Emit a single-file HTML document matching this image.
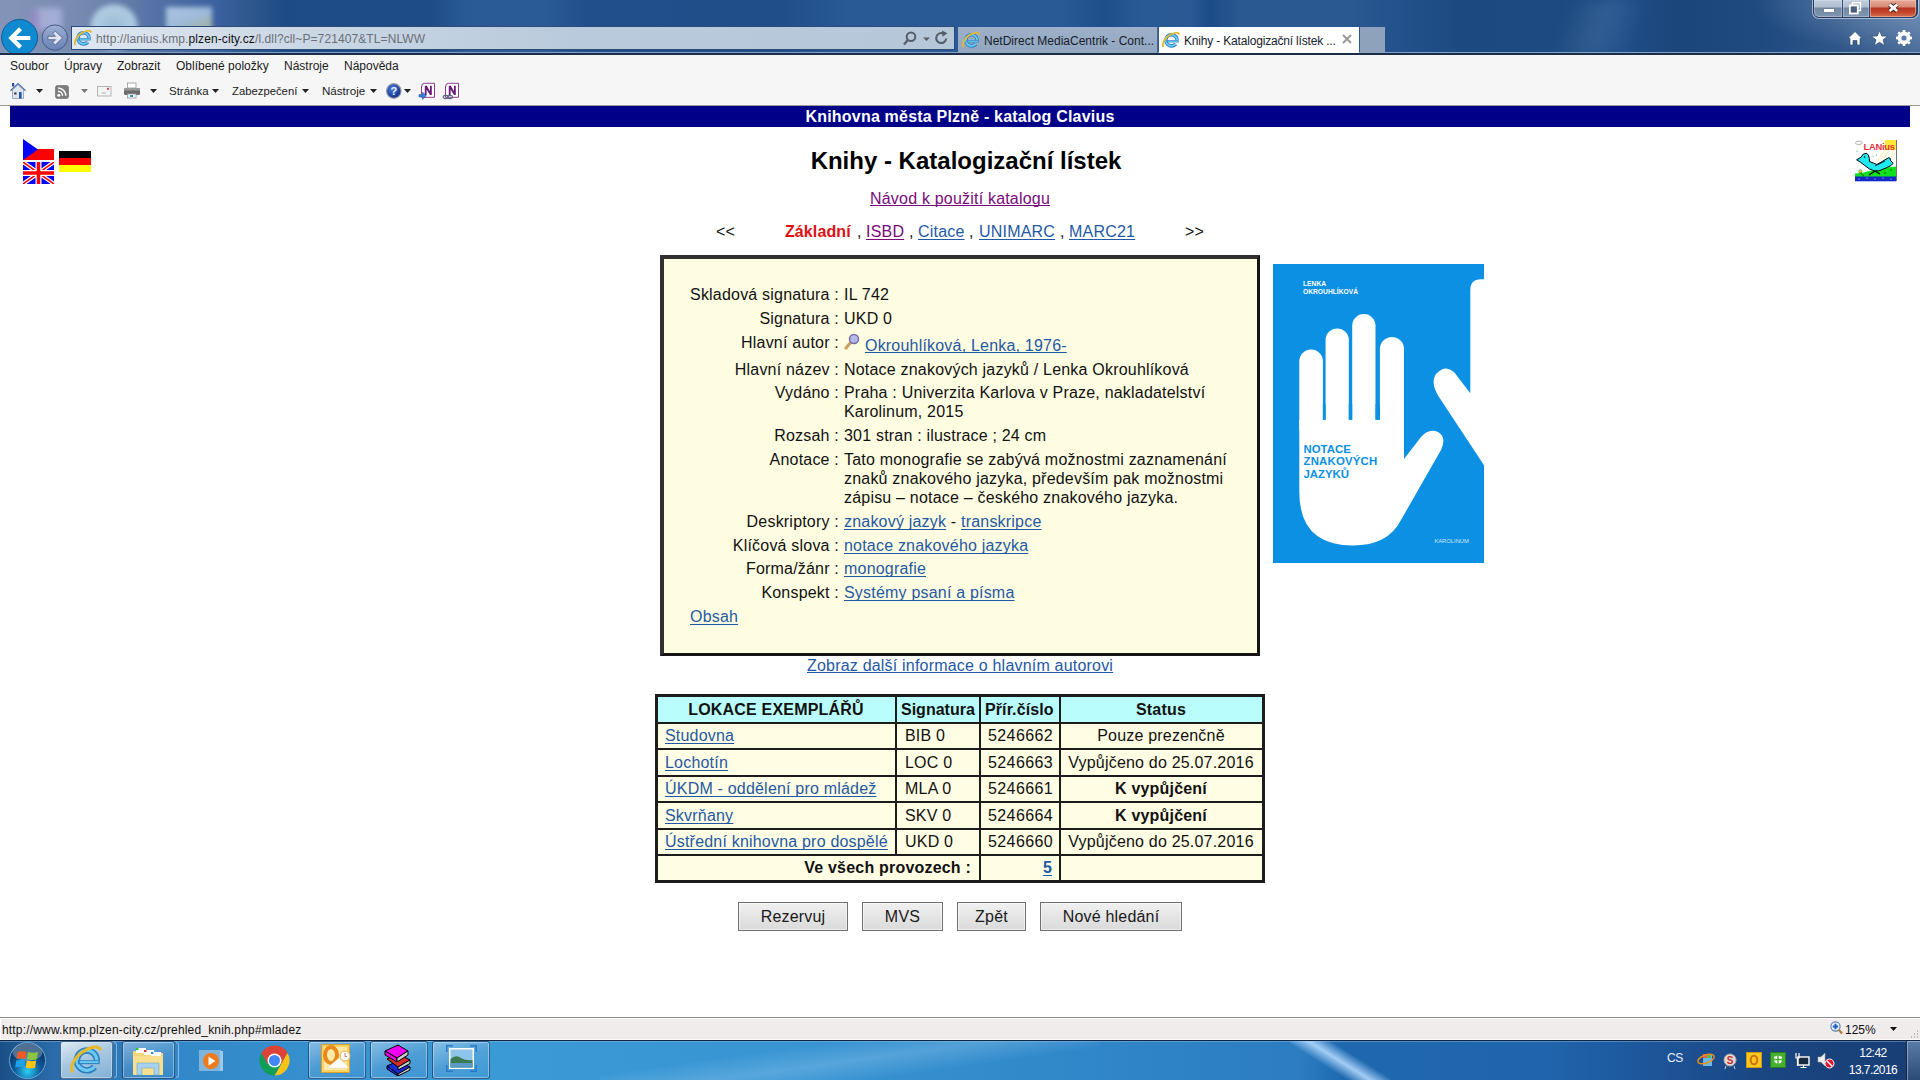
<!DOCTYPE html>
<html><head><meta charset="utf-8">
<style>
*{box-sizing:border-box}
html,body{margin:0;padding:0;width:1920px;height:1080px;overflow:hidden;background:#fff;font-family:"Liberation Sans",sans-serif}
.a{position:absolute;white-space:nowrap}
.t16{font-size:16px;line-height:19px;letter-spacing:0.2px;color:#111}
.b{font-weight:bold}
.lk{color:#1f59a4;text-decoration:underline;text-underline-offset:1.5px;text-decoration-skip-ink:none}
.vl{color:#7a0a7a;text-decoration:underline;text-underline-offset:1.5px;text-decoration-skip-ink:none}
.ui{font-size:12px;line-height:15px;color:#1b1b1b}
#top{left:0;top:0;width:1920px;height:55px;overflow:hidden;background:linear-gradient(90deg,#7a8cb0 0px,#7083aa 60px,#5a76a6 140px,#3d62a0 215px,#30598f 245px,#1d4b85 285px,#1d4c87 430px,#2a5a95 465px,#2c5c98 540px,#214f8b 585px,#1f4e89 780px,#2a5a96 850px,#2a5a96 1060px,#1f4f8a 1105px,#2a5a95 1140px,#2a5994 1190px,#1c4c88 1210px,#2a5890 1240px,#2a5890 1350px,#22518b 1400px,#1c4a80 1460px,#1d4a80 1580px,#1f4d86 1620px,#1b467c 1680px,#1e4a80 1760px,#2f5688 1840px,#4a6c9a 1920px)}
#menubar{left:0;top:55px;width:1920px;height:50px;background:#f6f6f7}
#status{left:0;top:1017px;width:1920px;height:23px;background:#efeceb;border-top:1px solid #8a8a8a;box-shadow:inset 1px 1px 0 #fff,inset 0 -1px 0 #fafafa}
#task{left:0;top:1040px;width:1920px;height:40px;overflow:hidden;background:linear-gradient(90deg,#1a4f86 0,#2a6aa8 50px,#3288c8 180px,#3a9ad6 480px,#3894d2 800px,#2f86c8 1100px,#2c7cc2 1300px,#1f68b0 1345px,#1f64ac 1550px,#1d5498 1660px,#1a4682 1760px,#183e74 1920px);border-top:1px solid #0d2540}
.tbb{border:1px solid rgba(10,40,80,.6);border-radius:3px;box-shadow:inset 0 0 0 1px rgba(220,240,255,.45);background:linear-gradient(160deg,rgba(200,225,245,.55) 0%,rgba(120,175,220,.35) 50%,rgba(80,150,210,.2) 100%)}
.lab{text-align:right;width:200px;left:639px}
.val{left:844px}
.btn{background:linear-gradient(#f0f0f0,#e5e5e5 50%,#dadada);box-shadow:inset 0 0 0 1px rgba(255,255,255,.55);border:1px solid #707070;font-size:16px;line-height:27px;text-align:center;color:#1a1a1a;letter-spacing:0.2px}
</style></head><body>
<div id="top" class="a">
<div class="a" style="left:0;top:0;width:150px;height:55px;background:linear-gradient(90deg,rgba(140,155,190,.55),rgba(140,155,190,.35) 80px,rgba(140,155,190,0))"></div>
<div class="a" style="left:36px;top:8px;width:26px;height:22px;background:#aeb6de;filter:blur(3px);opacity:.8"></div>
<div class="a" style="left:30px;top:10px;width:10px;height:22px;background:#9a88c8;filter:blur(3px);opacity:.6"></div>
<div class="a" style="left:90px;top:4px;width:48px;height:46px;border-radius:50%;background:radial-gradient(circle,#9ec2da 0,#b8d4e6 55%,#a8c4dc 70%,rgba(160,190,220,0) 100%);filter:blur(2.5px);opacity:.9"></div>
<div class="a" style="left:166px;top:7px;width:46px;height:24px;background:linear-gradient(160deg,#b8cfe8 0,#a8c4e2 50%,#b0b890 100%);filter:blur(2.5px);opacity:.9"></div>
<div class="a" style="left:1540px;top:0;width:120px;height:55px;background:linear-gradient(110deg,rgba(255,255,255,0) 20%,rgba(120,160,210,.22) 50%,rgba(255,255,255,0) 80%);filter:blur(6px)"></div>
<div class="a" style="left:1680px;top:0;width:240px;height:55px;background:radial-gradient(ellipse 170px 55px at 240px 0px,rgba(160,185,215,.55),rgba(160,185,215,0))"></div>
</div>
<div class="a" style="left:0;top:52px;width:1920px;height:1px;background:#7fa2c8"></div>
<div class="a" style="left:0;top:53px;width:1920px;height:2px;background:#1b2d47"></div>
<!-- back / forward -->
<svg class="a" style="left:0;top:17px" width="70" height="38" viewBox="0 17 70 38">
<defs><clipPath id="cl"><rect x="0" y="17" width="70" height="36"/></clipPath>
<linearGradient id="fg" x1="0" y1="0" x2="0" y2="1"><stop offset="0" stop-color="#9fb0d2"/><stop offset=".5" stop-color="#8196c2"/><stop offset="1" stop-color="#6a82b4"/></linearGradient></defs>
<g clip-path="url(#cl)">
<circle cx="19.6" cy="37.4" r="18" fill="#0f89d0" stroke="#1a5a94" stroke-width="1"/>
<path d="M10.5,38 L30.3,38 M20.5,28.8 L11.3,38 L20.5,47.2" stroke="#fff" stroke-width="4.2" fill="none" stroke-linejoin="miter" stroke-miterlimit="10"/>
<circle cx="54.8" cy="37.6" r="12.7" fill="url(#fg)" stroke="#42598a" stroke-width="1"/>
<polygon points="48,36.3 55.5,36.3 52.7,33.4 55.3,31.2 62.5,38 55.3,44.8 52.7,42.6 55.5,39.7 48,39.7" fill="#dfe3f3" stroke="#4d5f86" stroke-width="0.8"/>
</g></svg>
<!-- address bar -->
<div class="a" style="left:71px;top:26px;width:884px;height:24px;border:1px solid #2b4b78;background:linear-gradient(90deg,#dfe7f1 0,#cdd9e6 200px,#b9cadc 500px,#b6c7da 884px)"></div>
<svg class="a" style="left:74px;top:29px" width="18" height="17" viewBox="0 0 18 17"><circle cx="9.5" cy="9.3" r="5.6" fill="none" stroke="#2a7fc0" stroke-width="3.6" stroke-dasharray="0 3.9 31.3 0"/><circle cx="9.5" cy="9.3" r="5.6" fill="none" stroke="#6ccaf2" stroke-width="1.8" stroke-dasharray="0 3.9 31.3 0"/><rect x="4.5" y="9.2" width="12.2" height="2.2" fill="#2a7fc0"/><rect x="5.5" y="9.7" width="10.5" height="1.1" fill="#6ccaf2"/><path d="M1.4,16 C-0.6,13 3,6.5 8.5,3.6 C12.5,1.4 16.3,0.8 17.4,3.6" fill="none" stroke="#e8b828" stroke-width="1.7"/></svg>
<div class="a ui" style="left:96px;top:32px;color:#6b6f76;letter-spacing:0.1px">http://lanius.kmp.<span style="color:#111">plzen-city.cz</span>/l.dll?cll~P=721407&amp;TL=NLWW</div>
<svg class="a" style="left:902px;top:30px" width="50" height="17" viewBox="0 0 50 17">
<circle cx="9" cy="6.8" r="4.3" fill="none" stroke="#555d68" stroke-width="2"/>
<line x1="5.8" y1="10" x2="2" y2="14.5" stroke="#555d68" stroke-width="2.2"/>
<polygon points="21,7.5 28,7.5 24.5,11" fill="#555d68"/>
<path d="M44.2,8.5 A5,5 0 1 1 41.5,3.6" fill="none" stroke="#555d68" stroke-width="2"/>
<polygon points="40,0.5 45.5,3.2 40.5,6.8" fill="#555d68"/>
</svg>
<!-- tabs -->
<div class="a" style="left:958px;top:27px;width:200px;height:26px;background:linear-gradient(#9fb1c9,#91a6c0);border-right:1px solid #4a6a90"></div>
<svg class="a" style="left:962px;top:31px" width="18" height="17" viewBox="0 0 18 17"><circle cx="9.5" cy="9.3" r="5.6" fill="none" stroke="#2a7fc0" stroke-width="3.6" stroke-dasharray="0 3.9 31.3 0"/><circle cx="9.5" cy="9.3" r="5.6" fill="none" stroke="#6ccaf2" stroke-width="1.8" stroke-dasharray="0 3.9 31.3 0"/><rect x="4.5" y="9.2" width="12.2" height="2.2" fill="#2a7fc0"/><rect x="5.5" y="9.7" width="10.5" height="1.1" fill="#6ccaf2"/><path d="M1.4,16 C-0.6,13 3,6.5 8.5,3.6 C12.5,1.4 16.3,0.8 17.4,3.6" fill="none" stroke="#e8b828" stroke-width="1.7"/></svg>
<div class="a ui" style="left:984px;top:34px;color:#15202b">NetDirect MediaCentrik - Cont...</div>
<div class="a" style="left:1159px;top:27px;width:200px;height:26px;background:#fff"></div>
<svg class="a" style="left:1162px;top:31px" width="18" height="17" viewBox="0 0 18 17"><circle cx="9.5" cy="9.3" r="5.6" fill="none" stroke="#2a7fc0" stroke-width="3.6" stroke-dasharray="0 3.9 31.3 0"/><circle cx="9.5" cy="9.3" r="5.6" fill="none" stroke="#6ccaf2" stroke-width="1.8" stroke-dasharray="0 3.9 31.3 0"/><rect x="4.5" y="9.2" width="12.2" height="2.2" fill="#2a7fc0"/><rect x="5.5" y="9.7" width="10.5" height="1.1" fill="#6ccaf2"/><path d="M1.4,16 C-0.6,13 3,6.5 8.5,3.6 C12.5,1.4 16.3,0.8 17.4,3.6" fill="none" stroke="#e8b828" stroke-width="1.7"/></svg>
<div class="a ui" style="left:1184px;top:34px;color:#15202b;letter-spacing:-0.18px">Knihy - Katalogizační lístek ...</div>
<svg class="a" style="left:1342px;top:34px" width="10" height="10" viewBox="0 0 10 10"><path d="M1,1L9,9M9,1L1,9" stroke="#9a9a9a" stroke-width="2"/></svg>
<div class="a" style="left:1360px;top:27px;width:25px;height:26px;background:#8fa2bc"></div>
<!-- right icons -->
<svg class="a" style="left:1846px;top:29px" width="70" height="19" viewBox="0 0 70 19">
<path d="M2,9.5 L9,2.5 L16,9.5 L14,9.5 L14,16 L11,16 L11,11.5 L7,11.5 L7,16 L4,16 L4,9.5 Z" fill="#fff" stroke="#1e3f66" stroke-width="0.6"/>
<polygon points="33.5,1.5 35.7,7 41.5,7.2 37,10.8 38.6,16.5 33.5,13.3 28.4,16.5 30,10.8 25.5,7.2 31.3,7" fill="#fff" stroke="#1e3f66" stroke-width="0.6"/>
<g transform="translate(58,9)"><circle r="5" fill="none" stroke="#fff" stroke-width="3"/><g stroke="#fff" stroke-width="2.6"><line x1="0" y1="-8" x2="0" y2="8"/><line x1="-8" y1="0" x2="8" y2="0"/><line x1="-5.7" y1="-5.7" x2="5.7" y2="5.7"/><line x1="-5.7" y1="5.7" x2="5.7" y2="-5.7"/></g><circle r="2.6" fill="#5b7aa6"/></g>
</svg>
<!-- window buttons -->
<div class="a" style="left:1813px;top:-3px;width:105px;height:21px;border:1px solid #2a3a58;border-radius:0 0 6px 6px;background:#2d4b73;box-shadow:0 0 0 1px rgba(200,215,235,.7)"></div>
<div class="a" style="left:1814px;top:0;width:28px;height:17px;border-radius:0 0 0 5px;background:linear-gradient(#c0ccdb 0,#aebdd0 7px,#72889f 8px,#8196b2 17px);box-shadow:inset 0 0 0 1px rgba(230,238,248,.35)"></div>
<div class="a" style="left:1843px;top:0;width:26px;height:17px;background:linear-gradient(#c0ccdb 0,#aebdd0 7px,#72889f 8px,#8196b2 17px);box-shadow:inset 0 0 0 1px rgba(230,238,248,.35)"></div>
<div class="a" style="left:1870px;top:0;width:46px;height:17px;border-radius:0 0 5px 0;background:linear-gradient(#e4a898 0,#d88a78 7px,#b83420 8px,#c2442a 12px,#d07050 17px);box-shadow:inset 0 0 0 1px rgba(250,200,190,.55)"></div>
<div class="a" style="left:1824px;top:9px;width:10px;height:3px;background:#fff;box-shadow:0 0 1px #333"></div>
<svg class="a" style="left:1849px;top:2px" width="13" height="13" viewBox="0 0 13 13"><rect x="3.5" y="0.5" width="8" height="8" fill="none" stroke="#fff" stroke-width="1.4"/><rect x="0.8" y="3.5" width="8" height="8" fill="#4a5e7c" stroke="#fff" stroke-width="1.8"/></svg>
<svg class="a" style="left:1886px;top:1px" width="15" height="14" viewBox="0 0 15 14"><path d="M3.6,3.6L11.2,10M11.2,3.6L3.6,10" stroke="#2a1410" stroke-width="4.6" opacity=".85"/><path d="M3.6,3.6L11.2,10M11.2,3.6L3.6,10" stroke="#fff" stroke-width="2.8"/></svg>
<div id="menubar" class="a"></div>
<div class="a ui" style="left:10px;top:59px">Soubor</div>
<div class="a ui" style="left:64px;top:59px">Úpravy</div>
<div class="a ui" style="left:117px;top:59px">Zobrazit</div>
<div class="a ui" style="left:176px;top:59px">Oblíbené položky</div>
<div class="a ui" style="left:284px;top:59px">Nástroje</div>
<div class="a ui" style="left:344px;top:59px">Nápověda</div>
<!-- command bar -->
<svg class="a" style="left:9px;top:82px" width="19" height="18" viewBox="0 0 19 18">
<path d="M1.5,8.8 L9,1.5 L16.5,8.8" fill="none" stroke="#4466aa" stroke-width="1.2"/>
<path d="M3.5,8 L9,2.8 L14.5,8 L14.5,16.5 L3.5,16.5 Z" fill="#dfe6ee" stroke="#8a9aab" stroke-width="0.8"/>
<rect x="3" y="1" width="2.2" height="3.5" fill="#2a4c9a"/>
<rect x="5.2" y="10.5" width="2.3" height="2" fill="#333"/>
<rect x="10" y="10" width="2.6" height="6.5" fill="#2255aa"/>
</svg>
<svg class="a" style="left:36px;top:89px" width="8" height="5" viewBox="0 0 8 5"><polygon points="0,0 7,0 3.5,4" fill="#222"/></svg>
<svg class="a" style="left:55px;top:85px" width="14" height="14" viewBox="0 0 14 14"><rect x="0.5" y="0.5" width="13" height="13" rx="2" fill="#7d7d7d" stroke="#666" stroke-width="0.6"/><circle cx="3.8" cy="10.2" r="1.5" fill="#fff"/><path d="M3,6.3 A4.5,4.5 0 0 1 7.5,10.8 M3,3 A7.8,7.8 0 0 1 10.8,10.8" fill="none" stroke="#fff" stroke-width="1.5"/></svg>
<svg class="a" style="left:81px;top:89px" width="8" height="5" viewBox="0 0 8 5"><polygon points="0,0 7,0 3.5,4" fill="#777"/></svg>
<svg class="a" style="left:97px;top:86px" width="15" height="11" viewBox="0 0 15 11"><rect x="0.5" y="0.5" width="13.5" height="9.5" fill="#f4f4f4" stroke="#b5b5b5"/><rect x="10" y="1.8" width="2" height="2" fill="#d44"/><line x1="5" y1="7" x2="9" y2="7" stroke="#aaa"/></svg>
<svg class="a" style="left:123px;top:82px" width="18" height="17" viewBox="0 0 18 17"><rect x="4.5" y="1" width="8.5" height="5" fill="#fff" stroke="#999" stroke-width="0.8"/><rect x="1" y="6" width="16" height="7" rx="1.5" fill="#6b6b6b"/><rect x="1" y="6" width="16" height="2.5" fill="#9a9a9a"/><rect x="4.5" y="12" width="8.5" height="4" fill="#fff" stroke="#999" stroke-width="0.8"/><rect x="7" y="13" width="3" height="2" fill="#2aa"/></svg>
<svg class="a" style="left:150px;top:89px" width="8" height="5" viewBox="0 0 8 5"><polygon points="0,0 7,0 3.5,4" fill="#222"/></svg>
<div class="a ui" style="left:169px;top:84px;font-size:11.5px">Stránka</div><svg class="a" style="left:212px;top:89px" width="8" height="5" viewBox="0 0 8 5"><polygon points="0,0 7,0 3.5,4" fill="#222"/></svg>
<div class="a ui" style="left:232px;top:84px;font-size:11.3px">Zabezpečení</div><svg class="a" style="left:302px;top:89px" width="8" height="5" viewBox="0 0 8 5"><polygon points="0,0 7,0 3.5,4" fill="#222"/></svg>
<div class="a ui" style="left:322px;top:83px;font-size:11.6px">Nástroje</div><svg class="a" style="left:370px;top:89px" width="8" height="5" viewBox="0 0 8 5"><polygon points="0,0 7,0 3.5,4" fill="#222"/></svg>
<svg class="a" style="left:385px;top:82px" width="18" height="18" viewBox="0 0 18 18"><defs><radialGradient id="hg" cx="40%" cy="35%" r="65%"><stop offset="0" stop-color="#4a7ae0"/><stop offset="1" stop-color="#12308a"/></radialGradient></defs><circle cx="8.8" cy="9" r="7.3" fill="url(#hg)" stroke="#9aa0aa" stroke-width="1.2"/><text x="8.8" y="13.3" text-anchor="middle" font-family="Liberation Sans" font-weight="bold" font-size="11" fill="#f0f4ff">?</text></svg>
<svg class="a" style="left:404px;top:89px" width="8" height="5" viewBox="0 0 8 5"><polygon points="0,0 7,0 3.5,4" fill="#222"/></svg>
<svg class="a" style="left:418px;top:82px" width="18" height="18" viewBox="0 0 18 18"><path d="M6.5,1.3 L16.5,1.3 L16.5,15.3 L3.5,15.3 L3.5,5 Q3.5,1.3 6.5,1.3 Z" fill="#fff" stroke="#8c3c8c" stroke-width="1"/><path d="M6.8,13 V3.8 H8.8 L12,9.2 V3.8 H13.8 V13 H12 L8.6,7.4 V13 Z" fill="#6a1878"/><path d="M1,12.5 H4.5 V10 L8.3,13.8 L4.5,17.5 V15 H1 Z" fill="#3d78d8" stroke="#2a58a8" stroke-width=".5"/></svg>
<svg class="a" style="left:442px;top:82px" width="18" height="18" viewBox="0 0 18 18"><path d="M6.5,1.3 L16.5,1.3 L16.5,15.3 L3.5,15.3 L3.5,5 Q3.5,1.3 6.5,1.3 Z" fill="#fff" stroke="#8c3c8c" stroke-width="1"/><path d="M6.8,13 V3.8 H8.8 L12,9.2 V3.8 H13.8 V13 H12 L8.6,7.4 V13 Z" fill="#6a1878"/><ellipse cx="3.8" cy="15" rx="2.6" ry="1.6" fill="none" stroke="#5a6a80" stroke-width="1.1"/><ellipse cx="8" cy="15" rx="2.6" ry="1.6" fill="none" stroke="#5a6a80" stroke-width="1.1"/></svg>
<div class="a" style="left:0;top:105px;width:1920px;height:1px;background:#9a9a9a"></div>


<!-- PAGE -->
<div class="a" style="left:10px;top:106px;width:1900px;height:21px;background:#000088"></div>
<div class="a t16 b" style="left:0;width:1920px;top:107px;text-align:center;color:#fff">Knihovna města Plzně - katalog Clavius</div>

<!-- flags -->
<div class="a" style="left:23px;top:139px;width:31px;height:21px;background:linear-gradient(#fff 0 10px,#f00 10px)"></div>
<svg class="a" style="left:23px;top:139px" width="31" height="21"><polygon points="0,0 15,10.5 0,21" fill="#00f"/></svg>
<svg class="a" style="left:23px;top:162px" width="31" height="22" viewBox="0 0 31 22"><rect width="31" height="22" fill="#00f"/><path d="M0,0L31,22M31,0L0,22" stroke="#fff" stroke-width="4"/><path d="M0,0L31,22M31,0L0,22" stroke="#f00" stroke-width="1.5"/><path d="M15.5,0V22M0,11H31" stroke="#fff" stroke-width="6"/><path d="M15.5,0V22M0,11H31" stroke="#f00" stroke-width="3.5"/></svg>
<div class="a" style="left:59px;top:151px;width:32px;height:21px;background:linear-gradient(#000 0 7px,#f00 7px 14px,#ff0 14px)"></div>

<!-- LANius logo -->
<svg class="a" style="left:1855px;top:140px" width="42" height="42" viewBox="0 0 42 42">
<rect x="30" y="0" width="11" height="10" fill="#ffe838"/>
<path d="M30,10 L22,22 M34,10 L28,20 M38,10 L36,18" stroke="#fff4a0" stroke-width="1"/>
<rect x="41" y="0" width="1" height="41" fill="#707070"/>
<ellipse cx="3.8" cy="2.8" rx="3.3" ry="1.7" fill="none" stroke="#b0b0b0" stroke-width="1"/>
<text x="8.6" y="9.8" font-family="Liberation Sans" font-size="9.4" font-weight="bold" fill="#e8303a" letter-spacing="-0.3">LANius</text>
<circle cx="2" cy="11" r=".6" fill="#2a6"/><circle cx="18" cy="16" r=".6" fill="#2a6"/><circle cx="21.5" cy="15" r=".6" fill="#2a6"/>
<path d="M0,41 L0,33.5 Q8,33 14,31 Q24,29 30,27.5 Q36,27 41,26.5 L41,41 Z" fill="#10e020"/><circle cx="30" cy="33" r="1.3" fill="#0a0"/><circle cx="36" cy="30" r="1.2" fill="#0a0"/>
<circle cx="5.3" cy="31.5" r="1.6" fill="#c8f040" stroke="#406010" stroke-width=".6"/>
<path d="M5.3,33 L9,36" stroke="#205010" stroke-width=".8"/>
<path d="M14,35 L20,31 L25,34" fill="none" stroke="#000" stroke-width="1.2"/>
<path d="M1.6,19.8 L6,17.2 Q8,12.8 11.5,13.4 Q14.2,14.2 14.3,18.5 L14.5,21.5 L22,24.5 L33.6,17.7 Q36,17.8 35.3,20.2 L38.2,23.4 Q37,25.5 31,28 L24,30.8 Q19,31.6 14.5,29 Q9,25 5.4,22.2 Z" fill="#20e8f0" stroke="#000" stroke-width="1"/>
<path d="M20,26 L30,21" stroke="#000" stroke-width=".8"/>
<circle cx="9.6" cy="17" r=".8" fill="#000"/>
<rect x="0" y="36.5" width="41" height="4.8" fill="#1428c8"/>
<g fill="#fff"><circle cx="4" cy="39" r=".5"/><circle cx="12" cy="38" r=".5"/><circle cx="20" cy="39" r=".5"/><circle cx="28" cy="38" r=".5"/><circle cx="36" cy="39" r=".5"/></g>
</svg>

<div class="a b" style="left:0;width:1932px;top:147px;text-align:center;font-size:24px;line-height:28px;color:#000;letter-spacing:0px">Knihy - Katalogizační lístek</div>
<div class="a t16 vl" style="left:870px;top:189px;text-underline-offset:1px">Návod k použití katalogu</div>

<!-- nav row -->
<div class="a t16" style="left:716px;top:222px;color:#111">&lt;&lt;</div>
<div class="a t16 b" style="left:785px;top:222px;color:#dd1111;letter-spacing:0.1px">Základní</div>
<div class="a t16" style="left:857px;top:222px">,</div>
<div class="a t16 vl" style="left:866px;top:222px">ISBD</div>
<div class="a t16" style="left:909px;top:222px">,</div>
<div class="a t16 lk" style="left:918px;top:222px">Citace</div>
<div class="a t16" style="left:969px;top:222px">,</div>
<div class="a t16 lk" style="left:979px;top:222px">UNIMARC</div>
<div class="a t16" style="left:1060px;top:222px">,</div>
<div class="a t16 lk" style="left:1069px;top:222px">MARC21</div>
<div class="a t16" style="left:1185px;top:222px">&gt;&gt;</div>

<!-- box -->
<div class="a" style="left:660px;top:255px;width:600px;height:401px;background:#fffde1;border-style:solid;border-color:#303030 #151515 #151515 #303030;border-width:4px 3px 3px 4px"></div>

<div class="a t16 lab" style="top:285px">Skladová signatura :</div><div class="a t16 val" style="top:285px">IL 742</div>
<div class="a t16 lab" style="top:309px">Signatura :</div><div class="a t16 val" style="top:309px">UKD 0</div>
<div class="a t16 lab" style="top:333px">Hlavní autor :</div>
<svg class="a" style="left:844px;top:333px" width="16" height="17" viewBox="0 0 16 17"><line x1="2" y1="15" x2="7" y2="9" stroke="#c8a060" stroke-width="3" stroke-linecap="round"/><circle cx="10" cy="6" r="4.5" fill="#b8b8e8" stroke="#7070a8" stroke-width="1.5"/></svg>
<div class="a t16 val lk" style="top:336px;left:865px;text-underline-offset:1px">Okrouhlíková, Lenka, 1976-</div>
<div class="a t16 lab" style="top:360px">Hlavní název :</div><div class="a t16 val" style="top:360px">Notace znakových jazyků / Lenka Okrouhlíková</div>
<div class="a t16 lab" style="top:383px">Vydáno :</div><div class="a t16 val" style="top:383px">Praha : Univerzita Karlova v Praze, nakladatelství<br>Karolinum, 2015</div>
<div class="a t16 lab" style="top:426px">Rozsah :</div><div class="a t16 val" style="top:426px">301 stran : ilustrace ; 24 cm</div>
<div class="a t16 lab" style="top:450px">Anotace :</div><div class="a t16 val" style="top:450px">Tato monografie se zabývá možnostmi zaznamenání<br>znaků znakového jazyka, především pak možnostmi<br>zápisu – notace – českého znakového jazyka.</div>
<div class="a t16 lab" style="top:512px">Deskriptory :</div><div class="a t16 val" style="top:512px"><span class="lk">znakový jazyk</span> - <span class="lk">transkripce</span></div>
<div class="a t16 lab" style="top:536px">Klíčová slova :</div><div class="a t16 val lk" style="top:536px">notace znakového jazyka</div>
<div class="a t16 lab" style="top:559px">Forma/žánr :</div><div class="a t16 val lk" style="top:559px">monografie</div>
<div class="a t16 lab" style="top:583px">Konspekt :</div><div class="a t16 val lk" style="top:583px">Systémy psaní a písma</div>
<div class="a t16 lk" style="top:607px;left:690px">Obsah</div>

<div class="a t16 lk" style="top:656px;left:807px;text-underline-offset:1px">Zobraz další informace o hlavním autorovi</div>


<!-- cover -->
<svg class="a" style="left:1273px;top:264px" width="211" height="299" viewBox="0 0 211 299">
<rect width="211" height="299" fill="#0b90e3"/>
<text x="30" y="22.3" font-family="Liberation Sans" font-size="6.7" font-weight="bold" fill="#fff">LENKA</text>
<text x="30" y="30" font-family="Liberation Sans" font-size="6.7" font-weight="bold" fill="#fff">OKROUHLÍKOVÁ</text>
<g fill="#fff">
<rect x="26.3" y="85.6" width="23.6" height="90" rx="11.8"/>
<rect x="52.6" y="64.4" width="23.2" height="110" rx="11.6"/>
<rect x="79.2" y="50" width="23.3" height="120" rx="11.6"/>
<rect x="106.9" y="73" width="24.1" height="100" rx="12"/>
<path d="M26.3,155.7 L131,155.7 L131,195 L148,173 Q156,164 165,168 Q174,173 168,186 L128,256 Q115,281.5 80,281.5 Q26.3,281.5 26.3,228 Z"/>
<path d="M197.3,129.3 L197.3,26 Q197.3,15.3 208,15.3 L211,15.3 L211,201.3 L166,133 Q157,119 163,110 Q172,100 181,108 Z"/>
</g>
<rect x="49.9" y="140" width="2.7" height="15.7" fill="#0b90e3"/>
<rect x="75.8" y="140" width="3.4" height="15.7" fill="#0b90e3"/>
<rect x="102.5" y="140" width="4.4" height="15.7" fill="#0b90e3"/>
<text x="30.5" y="188.7" font-family="Liberation Sans" font-size="11.4" font-weight="bold" fill="#0b90e3">NOTACE</text>
<text x="30.5" y="200.7" font-family="Liberation Sans" font-size="11.4" font-weight="bold" fill="#0b90e3" letter-spacing="0.2">ZNAKOVÝCH</text>
<text x="30.5" y="214" font-family="Liberation Sans" font-size="11.4" font-weight="bold" fill="#0b90e3">JAZYKŮ</text>
<text x="161.4" y="278.8" font-family="Liberation Sans" font-size="5.8" fill="#cfe6f8">KAROLINUM</text>
</svg>

<!-- table -->
<div class="a" style="left:655px;top:694px;width:610px;height:189px;background:#1c1c1c"></div>
<div class="a" style="left:658px;top:697px;width:237px;height:25px;background:#b9fdfc"></div>
<div class="a" style="left:897px;top:697px;width:82px;height:25px;background:#b9fdfc"></div>
<div class="a" style="left:981px;top:697px;width:78px;height:25px;background:#b9fdfc"></div>
<div class="a" style="left:1061px;top:697px;width:201px;height:25px;background:#b9fdfc"></div>
<div class="a" style="left:658px;top:724px;width:237px;height:24px;background:#fffde3"></div>
<div class="a" style="left:897px;top:724px;width:82px;height:24px;background:#fffde3"></div>
<div class="a" style="left:981px;top:724px;width:78px;height:24px;background:#fffde3"></div>
<div class="a" style="left:1061px;top:724px;width:201px;height:24px;background:#fffde3"></div>
<div class="a" style="left:658px;top:750px;width:237px;height:25px;background:#fffde3"></div>
<div class="a" style="left:897px;top:750px;width:82px;height:25px;background:#fffde3"></div>
<div class="a" style="left:981px;top:750px;width:78px;height:25px;background:#fffde3"></div>
<div class="a" style="left:1061px;top:750px;width:201px;height:25px;background:#fffde3"></div>
<div class="a" style="left:658px;top:777px;width:237px;height:24px;background:#fffde3"></div>
<div class="a" style="left:897px;top:777px;width:82px;height:24px;background:#fffde3"></div>
<div class="a" style="left:981px;top:777px;width:78px;height:24px;background:#fffde3"></div>
<div class="a" style="left:1061px;top:777px;width:201px;height:24px;background:#fffde3"></div>
<div class="a" style="left:658px;top:803px;width:237px;height:25px;background:#fffde3"></div>
<div class="a" style="left:897px;top:803px;width:82px;height:25px;background:#fffde3"></div>
<div class="a" style="left:981px;top:803px;width:78px;height:25px;background:#fffde3"></div>
<div class="a" style="left:1061px;top:803px;width:201px;height:25px;background:#fffde3"></div>
<div class="a" style="left:658px;top:830px;width:237px;height:24px;background:#fffde3"></div>
<div class="a" style="left:897px;top:830px;width:82px;height:24px;background:#fffde3"></div>
<div class="a" style="left:981px;top:830px;width:78px;height:24px;background:#fffde3"></div>
<div class="a" style="left:1061px;top:830px;width:201px;height:24px;background:#fffde3"></div>
<div class="a" style="left:658px;top:856px;width:321px;height:24px;background:#fffde3"></div>
<div class="a" style="left:981px;top:856px;width:78px;height:24px;background:#fffde3"></div>
<div class="a" style="left:1061px;top:856px;width:201px;height:24px;background:#fffde3"></div>
<div class="a t16 b" style="left:626px;width:300px;text-align:center;top:700px">LOKACE EXEMPLÁŘŮ</div>
<div class="a t16 b" style="left:901px;top:700px;letter-spacing:0">Signatura</div>
<div class="a t16 b" style="left:985px;top:700px;letter-spacing:0.1px">Přír.číslo</div>
<div class="a t16 b" style="left:1011px;width:300px;text-align:center;top:700px">Status</div>
<div class="a t16 lk" style="left:665px;top:726px;">Studovna</div>
<div class="a t16 " style="left:905px;top:726px;">BIB 0</div>
<div class="a t16 " style="left:988px;top:726px;letter-spacing:0.4px">5246662</div>
<div class="a t16 " style="left:1011px;width:300px;text-align:center;top:726px">Pouze prezenčně</div>
<div class="a t16 lk" style="left:665px;top:753px;">Lochotín</div>
<div class="a t16 " style="left:905px;top:753px;">LOC 0</div>
<div class="a t16 " style="left:988px;top:753px;letter-spacing:0.4px">5246663</div>
<div class="a t16 " style="left:1011px;width:300px;text-align:center;top:753px">Vypůjčeno do 25.07.2016</div>
<div class="a t16 lk" style="left:665px;top:779px;">ÚKDM - oddělení pro mládež</div>
<div class="a t16 " style="left:905px;top:779px;">MLA 0</div>
<div class="a t16 " style="left:988px;top:779px;letter-spacing:0.4px">5246661</div>
<div class="a t16 b" style="left:1011px;width:300px;text-align:center;top:779px">K vypůjčení</div>
<div class="a t16 lk" style="left:665px;top:806px;">Skvrňany</div>
<div class="a t16 " style="left:905px;top:806px;">SKV 0</div>
<div class="a t16 " style="left:988px;top:806px;letter-spacing:0.4px">5246664</div>
<div class="a t16 b" style="left:1011px;width:300px;text-align:center;top:806px">K vypůjčení</div>
<div class="a t16 lk" style="left:665px;top:832px;">Ústřední knihovna pro dospělé</div>
<div class="a t16 " style="left:905px;top:832px;">UKD 0</div>
<div class="a t16 " style="left:988px;top:832px;letter-spacing:0.4px">5246660</div>
<div class="a t16 " style="left:1011px;width:300px;text-align:center;top:832px">Vypůjčeno do 25.07.2016</div>
<div class="a t16 b" style="left:671px;width:300px;text-align:right;top:858px">Ve všech provozech :</div>
<div class="a t16 b lk" style="left:752px;width:300px;text-align:right;top:858px">5</div>
<div class="a btn" style="left:738px;top:902px;width:110px;height:29px">Rezervuj</div>
<div class="a btn" style="left:862px;top:902px;width:81px;height:29px">MVS</div>
<div class="a btn" style="left:957px;top:902px;width:69px;height:29px">Zpět</div>
<div class="a btn" style="left:1040px;top:902px;width:142px;height:29px">Nové hledání</div>
<div id="status" class="a"></div>
<div class="a ui" style="left:2px;top:1023px;color:#111;font-size:12px;letter-spacing:0.17px">http://www.kmp.plzen-city.cz/prehled_knih.php#mladez</div>
<svg class="a" style="left:1830px;top:1021px" width="13" height="14" viewBox="0 0 13 14"><circle cx="5.5" cy="5.5" r="4.6" fill="#e8f0fa" stroke="#5a7fb0" stroke-width="1.1"/><path d="M5.5,2.8V8.2M2.8,5.5H8.2" stroke="#1f5fc4" stroke-width="2"/><line x1="8.8" y1="8.8" x2="12" y2="12.5" stroke="#b07a30" stroke-width="2.2"/></svg>
<div class="a ui" style="left:1845px;top:1023px;color:#111">125%</div>
<svg class="a" style="left:1889px;top:1026px" width="9" height="6" viewBox="0 0 9 6"><polygon points="1,1 8,1 4.5,5" fill="#111"/></svg>
<svg class="a" style="left:1909px;top:1029px" width="10" height="10" viewBox="0 0 10 10"><g fill="#8a8a8a"><rect x="8" y="1.5" width="1" height="1"/><rect x="5" y="4.5" width="1" height="1"/><rect x="8" y="4.5" width="1" height="1"/><rect x="2" y="7.5" width="1" height="1"/><rect x="5" y="7.5" width="1" height="1"/><rect x="8" y="7.5" width="1" height="1"/></g></svg>
<div id="task" class="a">
<div class="a" style="left:0;top:0;width:1920px;height:1px;background:rgba(150,190,230,.45)"></div>
<div class="a" style="left:600px;top:0;width:500px;height:40px;background:linear-gradient(172deg,rgba(255,255,255,0) 30%,rgba(180,220,250,.25) 50%,rgba(255,255,255,0) 70%)"></div>
<div class="a" style="left:1290px;top:0;width:100px;height:40px;background:linear-gradient(32deg,rgba(255,255,255,0) 36%,rgba(185,222,255,.85) 50%,rgba(255,255,255,0) 64%)"></div>
</div>
<!-- start orb -->
<svg class="a" style="left:8px;top:1041px" width="40" height="39" viewBox="0 0 40 39">
<defs><radialGradient id="og" cx="50%" cy="80%" r="60%"><stop offset="0" stop-color="#2ad0f8"/><stop offset=".6" stop-color="#0f5a9a"/><stop offset="1" stop-color="#0a3a6a"/></radialGradient></defs>
<circle cx="19.5" cy="19.5" r="18" fill="url(#og)" stroke="#6aa8d8" stroke-width="1"/>
<ellipse cx="19.5" cy="11" rx="15" ry="9" fill="rgba(255,255,255,.28)"/>
<path d="M9.5,11.5 Q13,9.5 18.5,11 L17.5,18 Q12.5,16.5 8.5,18 Z" fill="#f05a22"/>
<path d="M20,11 Q25,12.5 30,11 L28.5,18.5 Q24,19.5 19,18 Z" fill="#8cc63f"/>
<path d="M8.2,19.5 Q12.5,18 17.2,19.5 L16.2,26.5 Q11.5,25 7.2,26.5 Z" fill="#1ea0e6"/>
<path d="M18.8,19.5 Q23.5,21 28.2,19.5 L27,27 Q22.5,28 17.7,26.5 Z" fill="#fcc314"/>
</svg>
<!-- taskbar buttons -->
<div class="a tbb" style="left:60px;top:1041px;width:53px;height:38px;background:linear-gradient(160deg,#dfeaf3 0%,#a9c8e0 45%,#7fb0d6 100%)"></div>
<div class="a" style="left:114px;top:1042px;width:3px;height:36px;border:1px solid rgba(220,240,255,.5);border-left:none;border-radius:0 3px 3px 0"></div>
<div class="a tbb" style="left:122px;top:1041px;width:53px;height:38px"></div>
<div class="a" style="left:176px;top:1042px;width:3px;height:36px;border:1px solid rgba(220,240,255,.5);border-left:none;border-radius:0 3px 3px 0"></div>
<div class="a tbb" style="left:308px;top:1041px;width:58px;height:38px"></div>
<div class="a tbb" style="left:370px;top:1041px;width:58px;height:38px"></div>
<div class="a tbb" style="left:432px;top:1041px;width:58px;height:38px"></div>
<!-- IE big -->
<svg class="a" style="left:70px;top:1043px" width="32" height="32" viewBox="0 0 18 17"><circle cx="9.5" cy="9.3" r="5.6" fill="none" stroke="#2a7fc0" stroke-width="3.6" stroke-dasharray="0 3.9 31.3 0"/><circle cx="9.5" cy="9.3" r="5.6" fill="none" stroke="#6ccaf2" stroke-width="1.8" stroke-dasharray="0 3.9 31.3 0"/><rect x="4.5" y="9.2" width="12.2" height="2.2" fill="#2a7fc0"/><rect x="5.5" y="9.7" width="10.5" height="1.1" fill="#6ccaf2"/><path d="M1.4,16 C-0.6,13 3,6.5 8.5,3.6 C12.5,1.4 16.3,0.8 17.4,3.6" fill="none" stroke="#e8b828" stroke-width="1.7"/></svg>
<!-- explorer -->
<svg class="a" style="left:132px;top:1047px" width="32" height="29" viewBox="0 0 32 29">
<path d="M1,4 L11,4 L13,6 L31,6 L31,28 L1,28 Z" fill="#f3d67a"/>
<rect x="4" y="1" width="10" height="5" fill="#fff"/><rect x="4" y="1" width="2.5" height="2" fill="#2c2"/>
<rect x="12" y="3" width="10" height="5" fill="#fff"/><rect x="12" y="3" width="2.5" height="2" fill="#c33"/>
<rect x="19" y="5" width="10" height="5" fill="#fff"/><rect x="19" y="5" width="2.5" height="2" fill="#39c"/>
<path d="M1,9 L31,9 L31,28 L1,28 Z" fill="#f7df8f"/>
<path d="M5,28 L5,16 L27,16 L27,28 L22,28 L22,21 L10,21 L10,28 Z" fill="#a6d2ef" stroke="#7ab" stroke-width=".6"/>
</svg>
<!-- WMP -->
<svg class="a" style="left:199px;top:1050px" width="26" height="22" viewBox="0 0 26 22"><rect x="21" y="1" width="3" height="20" fill="#bcd8ee" opacity=".8"/><rect x="0" y="0" width="22" height="21" fill="#9cc8e8" opacity=".7"/><circle cx="12" cy="11" r="8" fill="#f07a1a"/><polygon points="9.5,6.5 16.5,11 9.5,15.5" fill="#fff"/></svg>
<!-- chrome -->
<svg class="a" style="left:259px;top:1045px" width="31" height="31" viewBox="-15.5 -15.5 31 31">
<path d="M0,-15 A15,15 0 0 1 13,-7.5 L0,-7.5 Z" fill="#db4437"/>
<path d="M13,-7.5 A15,15 0 0 1 -13,-7.5" fill="#db4437"/>
<path d="M-13,-7.5 A15,15 0 0 1 13,-7.5 L6.5,3.75 Z" fill="#db4437"/>
<path d="M13,-7.5 A15,15 0 0 1 0,15 L6.5,3.75 Z" fill="#fcc314"/>
<path d="M0,15 A15,15 0 0 1 -13,-7.5 L-6.5,3.75 Z" fill="#0f9d58"/>
<path d="M-13,-7.5 L0,-7.5 L-6.5,3.75 Z" fill="#db4437"/>
<path d="M-6.5,3.75 L6.5,3.75 L0,15 Z" fill="#0f9d58"/>
<path d="M6.5,3.75 L0,15 L13,-7.5 Z" fill="#fcc314"/>
<circle r="7" fill="#fff"/><circle r="5.5" fill="#4285f4"/>
</svg>
<!-- outlook -->
<svg class="a" style="left:321px;top:1044px" width="31" height="30" viewBox="0 0 31 30"><rect x="0.5" y="0.5" width="28" height="28" fill="#fbd260" stroke="#d8a030"/><rect x="3" y="3" width="23" height="23" fill="#fde9a8"/><ellipse cx="10" cy="11" rx="6" ry="8" fill="none" stroke="#e8891a" stroke-width="4"/><path d="M6,24 L18,14 L28,24 Z" fill="#fff" stroke="#ddb" stroke-width=".6"/><circle cx="24" cy="12" r="5" fill="#fff" stroke="#e8b040"/><path d="M24,9V12.5H26" stroke="#c77" fill="none"/></svg>
<!-- books -->
<svg class="a" style="left:384px;top:1044px" width="29" height="32" viewBox="0 0 29 32">
<path d="M3,22 L14,17 L26,23 L14,30 Z" fill="#1a2ad8" stroke="#000" stroke-width="1"/><path d="M3,22 L3,25 L14,32 L14,30 Z" fill="#1a2ad8" stroke="#000" stroke-width="1"/><path d="M14,30 L26,23 L26,26 L14,32Z" fill="#ccc" stroke="#000" stroke-width="1"/>
<path d="M3,15 L14,10 L26,16 L14,23 Z" fill="#d82a2a" stroke="#000" stroke-width="1"/><path d="M14,23 L26,16 L26,19.5 L14,26Z" fill="#ccc" stroke="#000" stroke-width="1"/>
<path d="M1,7 L14,1 L24,7 L13,14 Z" fill="#f000f0" stroke="#000" stroke-width="1"/><path d="M1,7 L1,11 L13,18 L13,14 Z" fill="#e000e0" stroke="#000" stroke-width="1"/><path d="M13,14 L24,7 L24,11 L13,18Z" fill="#ccc" stroke="#000" stroke-width="1"/>
</svg>
<!-- photo -->
<svg class="a" style="left:446px;top:1045px" width="31" height="27" viewBox="0 0 31 27"><rect x="3" y="3" width="25" height="21" fill="#fff"/><rect x="4.5" y="4.5" width="22" height="18" fill="#8cc4ea"/><path d="M4.5,14 Q10,9 15,13 Q20,16 26.5,15 L26.5,22.5 L4.5,22.5Z" fill="#3a7a50"/><rect x="4.5" y="18" width="22" height="4.5" fill="#5a9ac8"/><path d="M0.5,7V0.5H7M24,0.5H30.5V7M30.5,20V26.5H24M7,26.5H0.5V20" fill="none" stroke="#2a78c8" stroke-width="2"/></svg>
<!-- tray -->
<div class="a" style="left:1667px;top:1051px;font-size:12px;line-height:14px;color:#e8eef6;letter-spacing:-0.3px">CS</div>
<svg class="a" style="left:1697px;top:1051px" width="18" height="16" viewBox="0 0 18 16"><rect x="6" y="3" width="9" height="12" fill="#6ab8e8"/><rect x="6" y="3" width="4" height="4" fill="#e55"/><rect x="10" y="3" width="4" height="4" fill="#5b5"/><ellipse cx="9" cy="8" rx="8.5" ry="4" fill="none" stroke="#e8901a" stroke-width="1.5" transform="rotate(-20 9 8)"/></svg>
<svg class="a" style="left:1722px;top:1053px" width="16" height="16" viewBox="0 0 16 16"><circle cx="8" cy="7" r="6" fill="#e8d8d8" stroke="#aaa"/><text x="8" y="11" text-anchor="middle" font-family="Liberation Sans" font-weight="bold" font-size="10" fill="#c03030">S</text><path d="M4,13 L3,16 M12,13 L13,16" stroke="#ccc"/></svg>
<svg class="a" style="left:1746px;top:1052px" width="16" height="16" viewBox="0 0 16 16"><rect x="0.5" y="0.5" width="15" height="15" fill="#f8c820" stroke="#d09a10"/><ellipse cx="8" cy="8" rx="3.3" ry="4.3" fill="none" stroke="#d07010" stroke-width="2"/></svg>
<svg class="a" style="left:1770px;top:1052px" width="16" height="16" viewBox="0 0 16 16"><rect x="0.5" y="0.5" width="15" height="15" fill="#48b030" stroke="#2a8020"/><path d="M4,5 Q8,2 12,5 L11.5,10 Q8,13.5 4.5,10 Z" fill="#fff"/><path d="M8,3V13M4,7.5H12" stroke="#48b030" stroke-width="1.5"/></svg>
<svg class="a" style="left:1794px;top:1052px" width="17" height="17" viewBox="0 0 17 17"><rect x="4" y="5" width="11" height="8" fill="#1a2a40" stroke="#fff" stroke-width="1.4"/><path d="M9.5,13V15.5M6.5,15.5H12.5" stroke="#fff" stroke-width="1.2"/><path d="M2,1V6H5V1" stroke="#fff" fill="none" stroke-width="1.2"/><path d="M3.5,6V14" stroke="#fff" stroke-width="1.2"/></svg>
<svg class="a" style="left:1817px;top:1052px" width="18" height="17" viewBox="0 0 18 17"><path d="M1,5H4L8,1V14L4,10H1Z" fill="#eee" stroke="#aaa" stroke-width=".6"/><circle cx="12.5" cy="11.5" r="4.5" fill="#e8102a" stroke="#fff"/><path d="M9.8,8.8L15.2,14.2" stroke="#fff" stroke-width="1.6"/></svg>
<div class="a" style="left:1848px;top:1045px;width:50px;text-align:center;font-size:12px;line-height:17px;color:#fff;letter-spacing:-0.55px">12:42<br>13.7.2016</div>
<div class="a" style="left:1906px;top:1041px;width:14px;height:39px;border-left:1px solid rgba(10,20,40,.8);background:linear-gradient(#5a7da6,#2a4a78);box-shadow:inset 1px 1px 0 rgba(200,220,245,.5)"></div>
</body></html>
